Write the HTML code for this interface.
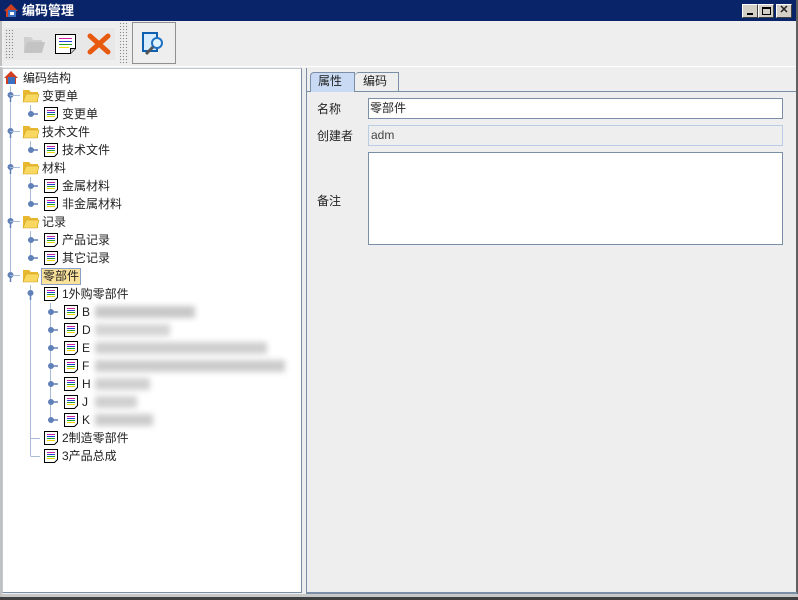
<!DOCTYPE html>
<html><head><meta charset="utf-8"><style>
*{margin:0;padding:0;box-sizing:border-box}
body{width:798px;height:600px;overflow:hidden;background:#eeeeee;font-family:"Liberation Sans","Noto Sans CJK SC",sans-serif;font-size:12px;color:#222;position:relative}
.a{position:absolute}
.t{position:absolute;white-space:nowrap;line-height:18px;height:18px}
</style></head><body>
<div class="a" style="left:0;top:0;width:798px;height:21px;background:#0a246a"></div>
<svg class="a" style="left:3px;top:3px" width="16" height="15" viewBox="0 0 16 15"><path d="M1 8 L8 1 L15 8 L13 8 L13 14 L3 14 L3 8Z" fill="#d04020"/><rect x="5" y="7" width="8" height="7" fill="#3a70c0"/><rect x="7" y="9" width="4" height="3" fill="#fff"/></svg>
<div class="t" style="left:22px;top:2px;color:#fff;font-weight:bold;font-size:13px">编码管理</div>
<div class="a" style="left:742px;top:4px;width:16px;height:14px;background:#d4d0c8;border:1px solid;border-color:#fff #404040 #404040 #fff"><div class="a" style="left:4px;top:8px;width:6px;height:2px;background:#000"></div></div>
<div class="a" style="left:758px;top:4px;width:16px;height:14px;background:#d4d0c8;border:1px solid;border-color:#fff #404040 #404040 #fff"><div class="a" style="left:3px;top:2px;width:9px;height:8px;border:1px solid #000;border-top-width:2px"></div></div>
<div class="a" style="left:776px;top:4px;width:16px;height:14px;background:#d4d0c8;border:1px solid;border-color:#fff #404040 #404040 #fff;font-size:11px;line-height:11px;text-align:center;font-weight:bold">✕</div>
<div class="a" style="left:796px;top:0;width:2px;height:600px;background:#606060"></div>
<div class="a" style="left:0;top:597px;width:798px;height:3px;background:#404040"></div>
<div class="a" style="left:0;top:594px;width:798px;height:3px;background:#c8c8c8"></div>
<div class="a" style="left:0;top:21px;width:2px;height:576px;background:#c0c0c0"></div>
<div class="a" style="left:4px;top:28px;width:111px;height:32px;background:#e8e8e8"></div>
<div class="a" style="left:5px;top:29px;width:10px;height:30px;background-image:radial-gradient(#888 0.7px,transparent 0.8px);background-size:3px 3px"></div>
<div class="a" style="left:119px;top:22px;width:10px;height:42px;background-image:radial-gradient(#888 0.7px,transparent 0.8px);background-size:3px 3px"></div>
<svg class="a" style="left:22px;top:33px" width="24" height="22"><path d="M2 4h7l2 3h9v13H2z" fill="#cfcfcf"/><path d="M5 9h18l-3 11H2z" fill="#c4c4c4"/></svg>
<svg class="a" style="left:54px;top:33px" width="24" height="22"><path d="M1.5 1.5h20v14l-5 5h-15z" fill="#fff" stroke="#000"/><path d="M16.5 20.5v-5h5" fill="#ccc" stroke="#000"/><path d="M5 5.5h13" stroke="#d020a0"/><path d="M5 8.5h13" stroke="#2040e0"/><path d="M5 11.5h13" stroke="#20a020"/><path d="M5 14.5h10" stroke="#f0e000"/></svg>
<svg class="a" style="left:87px;top:33px" width="24" height="22"><path d="M3 3L21 19M21 3L3 19" stroke="#e85a10" stroke-width="5" stroke-linecap="round"/></svg>
<div class="a" style="left:132px;top:22px;width:44px;height:42px;border:1px solid #909090;background:#eeeeee"></div>
<svg class="a" style="left:141px;top:31px" width="26" height="26"><rect x="2" y="2" width="14" height="18" fill="#d8ecff" stroke="#1060b0" stroke-width="2"/><circle cx="16" cy="12" r="5" fill="#e0f4ff" stroke="#2070c0" stroke-width="2"/><path d="M12 16L5 23" stroke="#555" stroke-width="3"/></svg>
<div class="a" style="left:0;top:66px;width:796px;height:1px;background:#fff"></div>
<div class="a" style="left:2px;top:68px;width:300px;height:525px;background:#fff;border:1px solid #7a8ea6;border-top-color:#c0c8d0;border-left-color:#c0c8d0"></div>
<svg class="a" style="left:0;top:0" width="300" height="600">
<g stroke="#a8bcd8" fill="none"><path d="M10.5 86V276"/><path d="M30.5 105V114M30.5 141V150M30.5 177V204M30.5 231V258M30.5 285V456"/><path d="M30.5 438.5H40M30.5 456.5H40"/><path d="M50.5 303V420"/></g>
<g fill="#6080b8" stroke="#6080b8">
<circle cx="10.5" cy="95" r="2.5"/><circle cx="10.5" cy="131" r="2.5"/><circle cx="10.5" cy="167" r="2.5"/><circle cx="10.5" cy="221" r="2.5"/><circle cx="10.5" cy="275" r="2.5"/>
<path d="M10.5 95v7M10.5 131v7M10.5 167v7M10.5 221v7M10.5 275v7M30.5 293v7" stroke-width="1.5"/>
<path d="M10 95.5h10M10 131.5h10M10 167.5h10M10 221.5h10M10 275.5h10" stroke="#a8bcd8"/>
<circle cx="30.5" cy="293" r="2.5"/>
<path d="M30 114h8M30 150h8M30 186h8M30 204h8M30 240h8M30 258h8M50 312h8M50 330h8M50 348h8M50 366h8M50 384h8M50 402h8M50 420h8" stroke-width="1.5"/>
<circle cx="31" cy="114" r="2.5"/><circle cx="31" cy="150" r="2.5"/><circle cx="31" cy="186" r="2.5"/><circle cx="31" cy="204" r="2.5"/><circle cx="31" cy="240" r="2.5"/><circle cx="31" cy="258" r="2.5"/>
<circle cx="51" cy="312" r="2.5"/><circle cx="51" cy="330" r="2.5"/><circle cx="51" cy="348" r="2.5"/><circle cx="51" cy="366" r="2.5"/><circle cx="51" cy="384" r="2.5"/><circle cx="51" cy="402" r="2.5"/><circle cx="51" cy="420" r="2.5"/>
</g>
<defs>
<g id="fo"><path d="M0 2h6l2 2h7v10H0z" fill="#e8b830"/><path d="M3 6h13l-2 8H0z" fill="#f8d860" stroke="#d0a020" stroke-width="0.6"/></g>
<g id="dc"><path d="M0.5 0.5h13v10l-3 3h-10z" fill="#fff" stroke="#000"/><path d="M3 3.5h8" stroke="#d020a0"/><path d="M3 5.5h8" stroke="#2040e0"/><path d="M3 7.5h8" stroke="#20a020"/><path d="M3 9.5h8" stroke="#f0d800"/></g>
</defs>
<g transform="translate(4,71)"><path d="M0 7L7 0L14 7H12V13H2V7Z" fill="#d04020"/><rect x="4" y="6" width="7" height="7" fill="#3a70c0"/></g>
<use href="#fo" x="23" y="88"/><use href="#fo" x="23" y="124"/><use href="#fo" x="23" y="160"/><use href="#fo" x="23" y="214"/><use href="#fo" x="23" y="268"/>
<use href="#dc" x="44" y="107"/><use href="#dc" x="44" y="143"/><use href="#dc" x="44" y="179"/><use href="#dc" x="44" y="197"/><use href="#dc" x="44" y="233"/><use href="#dc" x="44" y="251"/><use href="#dc" x="44" y="287"/><use href="#dc" x="44" y="431"/><use href="#dc" x="44" y="449"/>
<use href="#dc" x="64" y="305"/><use href="#dc" x="64" y="323"/><use href="#dc" x="64" y="341"/><use href="#dc" x="64" y="359"/><use href="#dc" x="64" y="377"/><use href="#dc" x="64" y="395"/><use href="#dc" x="64" y="413"/>
</svg>
<div class="t" style="left:23px;top:69px">编码结构</div>
<div class="t" style="left:42px;top:87px">变更单</div>
<div class="t" style="left:62px;top:105px">变更单</div>
<div class="t" style="left:42px;top:123px">技术文件</div>
<div class="t" style="left:62px;top:141px">技术文件</div>
<div class="t" style="left:42px;top:159px">材料</div>
<div class="t" style="left:62px;top:177px">金属材料</div>
<div class="t" style="left:62px;top:195px">非金属材料</div>
<div class="t" style="left:42px;top:213px">记录</div>
<div class="t" style="left:62px;top:231px">产品记录</div>
<div class="t" style="left:62px;top:249px">其它记录</div>
<div class="t" style="left:41px;top:268px;height:17px;line-height:15px;background:#fbe29a;border:1px solid #8aa0c8;padding:0 1px">零部件</div>
<div class="t" style="left:62px;top:285px">1外购零部件</div>
<div class="t" style="left:82px;top:303px">B</div>
<div class="t" style="left:82px;top:321px">D</div>
<div class="t" style="left:82px;top:339px">E</div>
<div class="t" style="left:82px;top:357px">F</div>
<div class="t" style="left:82px;top:375px">H</div>
<div class="t" style="left:82px;top:393px">J</div>
<div class="t" style="left:82px;top:411px">K</div>
<div class="a" style="left:95px;top:306px;width:100px;height:12px;background:#c8c8c8;filter:blur(3px)"></div>
<div class="a" style="left:95px;top:324px;width:75px;height:12px;background:#d4d4d4;filter:blur(3px)"></div>
<div class="a" style="left:95px;top:342px;width:172px;height:12px;background:#cfcfcf;filter:blur(3px)"></div>
<div class="a" style="left:95px;top:360px;width:190px;height:12px;background:#cccccc;filter:blur(3px)"></div>
<div class="a" style="left:95px;top:378px;width:55px;height:12px;background:#d0d0d0;filter:blur(3px)"></div>
<div class="a" style="left:95px;top:396px;width:42px;height:12px;background:#d0d0d0;filter:blur(3px)"></div>
<div class="a" style="left:95px;top:414px;width:58px;height:12px;background:#cccccc;filter:blur(3px)"></div>
<div class="t" style="left:62px;top:429px">2制造零部件</div>
<div class="t" style="left:62px;top:447px">3产品总成</div>
<div class="a" style="left:306px;top:68px;width:491px;height:526px;border-left:1px solid #7a8ea6;border-bottom:2px solid #7a8ea6"></div>
<div class="a" style="left:307px;top:91px;width:489px;height:1px;background:#7a8ea6"></div>
<div class="a" style="left:310px;top:72px;width:45px;height:20px;background:#c8daf4;border:1px solid #7a8ea6;border-bottom:none;border-radius:4px 0 0 0"></div>
<div class="t" style="left:318px;top:72px">属性</div>
<div class="a" style="left:355px;top:72px;width:44px;height:19px;background:#eeeeee;border:1px solid #7a8ea6;border-bottom:none;border-left:none;border-radius:4px 0 0 0"></div>
<div class="t" style="left:363px;top:72px">编码</div>
<div class="t" style="left:317px;top:100px">名称</div>
<div class="a" style="left:368px;top:98px;width:415px;height:21px;background:#fff;border:1px solid #7a8ea6"></div>
<div class="t" style="left:370px;top:99px">零部件</div>
<div class="t" style="left:317px;top:127px">创建者</div>
<div class="a" style="left:368px;top:125px;width:415px;height:21px;background:#eeeeee;border:1px solid #b8cce4"></div>
<div class="t" style="left:371px;top:126px;color:#444">adm</div>
<div class="t" style="left:317px;top:192px">备注</div>
<div class="a" style="left:368px;top:152px;width:415px;height:93px;background:#fff;border:1px solid #7a8ea6"></div>
</body></html>
